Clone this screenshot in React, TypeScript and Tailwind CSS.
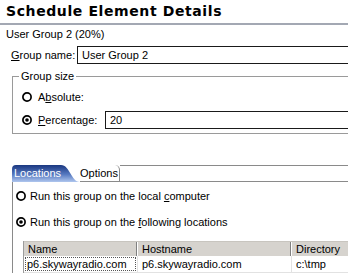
import React from "react";

const FONT = { fontFamily: '"Liberation Sans", Arial, sans-serif' };

function Radio({ checked }: { checked?: boolean }) {
  return (
    <svg width="10" height="10" viewBox="0 0 10 10" className="shrink-0">
      <circle cx="5" cy="5" r="4.1" fill="#fff" stroke="#000" strokeWidth="1.7" />
      {checked && <circle cx="5" cy="5" r="1.8" fill="#000" />}
    </svg>
  );
}

function LocationsTab() {
  return (
    <div className="relative w-[68px] h-[17px] shrink-0">
      <svg width="68" height="17" viewBox="0 0 68 17" className="absolute inset-0">
        <defs>
          <linearGradient id="tabgrad" x1="0" y1="0" x2="0" y2="1">
            <stop offset="0%" stopColor="#1a3780" />
            <stop offset="55%" stopColor="#5679c0" />
            <stop offset="100%" stopColor="#afc6ee" />
          </linearGradient>
        </defs>
        <path d="M0 17 V4 Q0 0 4 0 H49 C58 0 59 17 68 17 Z" fill="url(#tabgrad)" />
      </svg>
      <span className="relative block pl-[2px] leading-[17px] text-white">Locations</span>
    </div>
  );
}

export default function App() {
  return (
    <div
      className="w-[348px] h-[277px] overflow-hidden bg-white text-[11px] text-black"
      style={FONT}
    >
      {/* Header */}
      <div
        className="pt-[3px] pl-[6px] h-[21px] text-[14px] font-bold leading-[16px] tracking-[0.6px]"
        style={{ fontFamily: '"DejaVu Sans", Verdana, sans-serif' }}
      >
        Schedule Element Details
      </div>
      <div className="mt-[2px] h-[2px] bg-[#a3a8b3]" />

      <div className="mt-[3px] pl-[6px] leading-[12px]">User Group 2 (20%)</div>

      {/* Group name */}
      <div className="mt-[6px] flex items-center h-[18px]">
        <span className="pl-[11px] w-[77px] shrink-0">
          <span className="underline">G</span>roup name:
        </span>
        <div className="flex-1 h-[18px] border border-[#1a1a1a] mr-[-10px] pl-[4px] leading-[16px]">
          User Group 2
        </div>
      </div>

      {/* Group size */}
      <fieldset className="mt-[6px] ml-[12px] mr-[-10px] h-[64px] border border-[#9a9a9a] px-0 pb-0 pt-0">
        <legend className="ml-[6px] px-[2px] leading-[12px]">Group size</legend>
        <div className="mt-[8px] pl-[9px] flex items-center gap-[6px] h-[14px]">
          <Radio />
          <span>
            A<span className="underline">b</span>solute:
          </span>
        </div>
        <div className="mt-[7px] pl-[9px] flex items-center h-[18px]">
          <Radio checked />
          <span className="ml-[6px] w-[67px] shrink-0">
            <span className="underline">P</span>ercentage:
          </span>
          <div className="flex-1 h-[18px] border border-[#1a1a1a] pl-[4px] leading-[16px]">20</div>
        </div>
      </fieldset>

      {/* Tab folder */}
      <div className="mt-[31px] ml-[12px] mr-[-10px]">
        <div className="flex h-[17px]">
          <LocationsTab />
          <div className="w-[40px] shrink-0 border-b border-r border-[#8a8a8a] rounded-tr-[5px] leading-[16px]">
            Options
          </div>
          <div className="flex-1 border-t border-b border-[#8a8a8a]" />
        </div>
        <div className="border-l border-[#8a8a8a] pt-[7px]">
          <div className="flex items-center gap-[4px] h-[14px] pl-[3px]">
            <Radio />
            <span>
              Run this group on the local <span className="underline">c</span>omputer
            </span>
          </div>
          <div className="mt-[12px] flex items-center gap-[4px] h-[14px] pl-[3px]">
            <Radio checked />
            <span>
              Run this group on the <span className="underline">f</span>ollowing locations
            </span>
          </div>

          {/* Table */}
          <div className="mt-[12px] ml-[10px] border-l border-[#9c9c9c]">
            <div className="flex h-[15px] bg-[#d6d3ce] border-t border-[#c8c5bf] leading-[14px]">
              <div className="w-[113px] shrink-0 pl-[4px] border-r border-[#808080]">Name</div>
              <div className="w-[154px] shrink-0 pl-[4px] border-l border-white border-r border-r-[#808080]">
                Hostname
              </div>
              <div className="flex-1 pl-[4px] border-l border-white">Directory</div>
            </div>
            <div className="flex h-[17px] border-b border-[#e2e2e2] leading-[13px]">
              <div className="w-[114px] shrink-0 border-r border-[#e2e2e2] p-[1px]">
                <div className="h-[14px] border border-dotted border-[#555] pl-[1px]">
                  p6.skywayradio.com
                </div>
              </div>
              <div className="w-[154px] shrink-0 pl-[4px] pt-[2px] border-r border-[#e2e2e2]">
                p6.skywayradio.com
              </div>
              <div className="flex-1 pl-[4px] pt-[2px]">c:\tmp</div>
            </div>
          </div>
        </div>
      </div>
    </div>
  );
}
